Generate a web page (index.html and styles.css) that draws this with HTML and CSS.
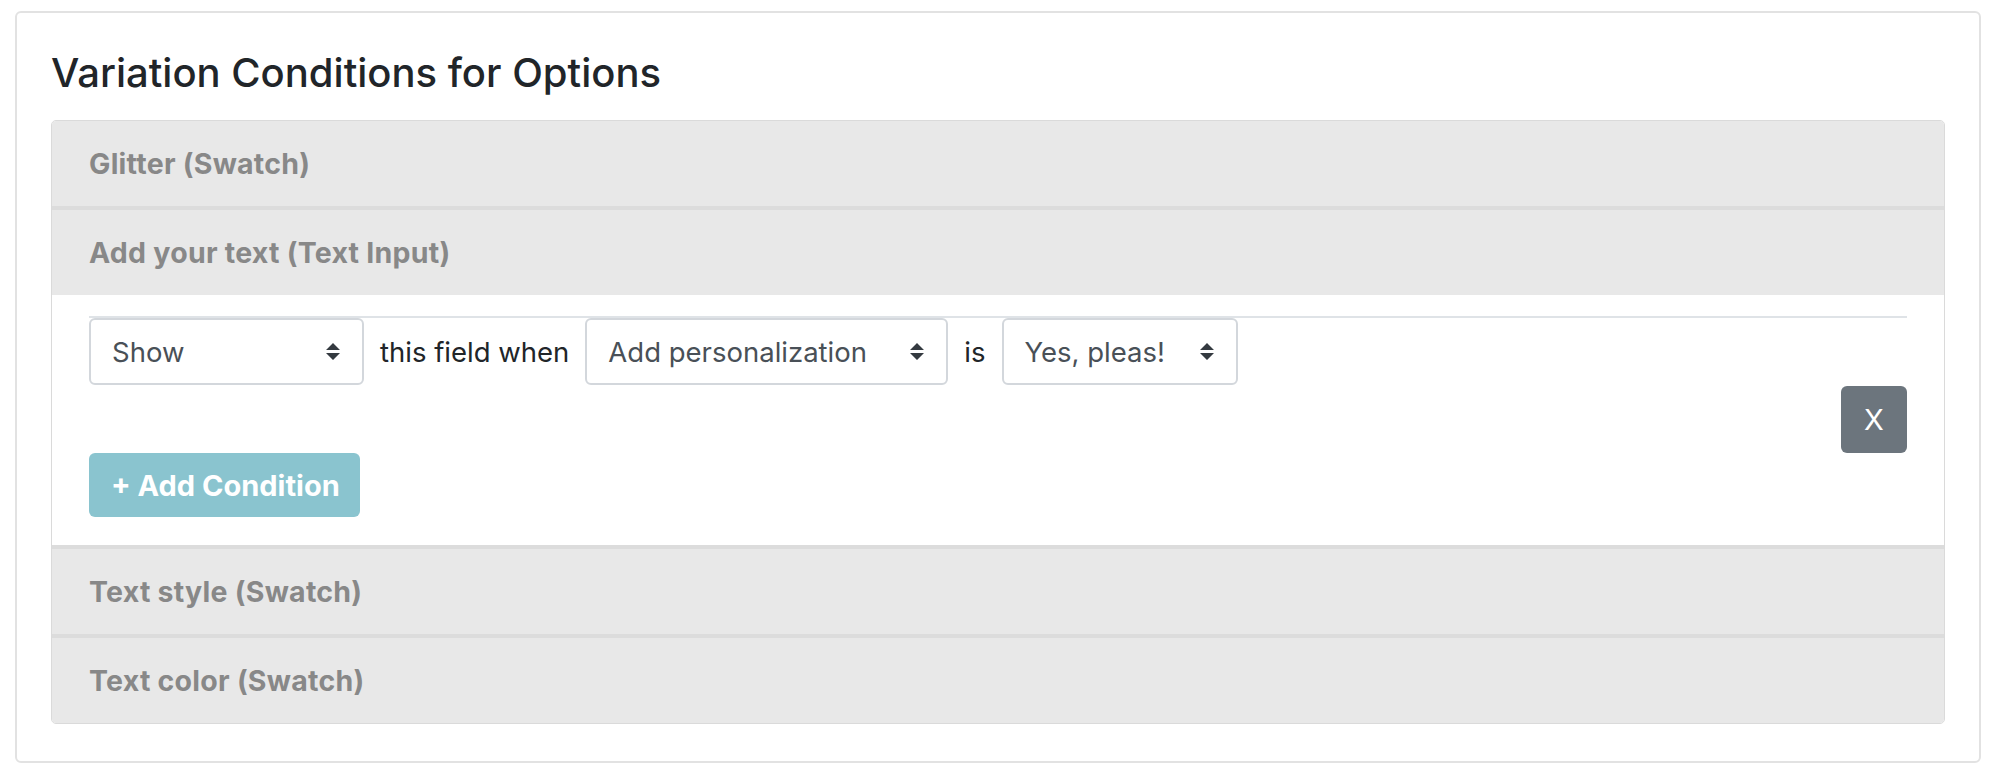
FILE: index.html
```html
<!DOCTYPE html>
<html lang="en">
<head>
<meta charset="utf-8">
<title>Variation Conditions for Options</title>
<link rel="stylesheet" href="styles.css">
</head>
<body>
<div class="card">
  <h3 class="title">Variation Conditions for Options</h3>
  <div class="accordion">
    <div class="acc-item">
      <div class="acc-header">Glitter (Swatch)</div>
    </div>
    <div class="acc-item">
      <div class="acc-header">Add your text (Text Input)</div>
      <div class="acc-body">
        <div class="rule"></div>
        <div class="cond-row">
          <div class="select sel-show"><span>Show</span><svg class="arrow" width="14" height="17" viewBox="0 0 14 17"><path d="M0 7 L7 0 L14 7 Z M0 10 L14 10 L7 17 Z" fill="#343a40"/></svg></div>
          <span class="cond-text">this field when</span>
          <div class="select sel-field"><span>Add personalization</span><svg class="arrow" width="14" height="17" viewBox="0 0 14 17"><path d="M0 7 L7 0 L14 7 Z M0 10 L14 10 L7 17 Z" fill="#343a40"/></svg></div>
          <span class="cond-text">is</span>
          <div class="select sel-value"><span>Yes, pleas!</span><svg class="arrow" width="14" height="17" viewBox="0 0 14 17"><path d="M0 7 L7 0 L14 7 Z M0 10 L14 10 L7 17 Z" fill="#343a40"/></svg></div>
        </div>
        <div class="remove-row"><button class="btn-remove" type="button">X</button></div>
        <button class="btn-add" type="button">+ Add Condition</button>
      </div>
    </div>
    <div class="acc-item">
      <div class="acc-header">Text style (Swatch)</div>
    </div>
    <div class="acc-item">
      <div class="acc-header">Text color (Swatch)</div>
    </div>
  </div>
</div>
</body>
</html>
```

FILE: styles.css
```css
html, body {
  margin: 0;
  padding: 0;
  background: #ffffff;
}

body {
  font-family: "Inter", "Liberation Sans", sans-serif;
  color: #212529;
}

.card {
  box-sizing: border-box;
  margin: 11px 0 0 15px;
  width: 1966px;
  height: 752px;
  border: 2px solid #e2e2e2;
  border-radius: 6px;
  padding: 0 34px;
}

.title {
  margin: 35px 0 22px 0;
  font-size: 40px;
  line-height: 50px;
  font-weight: 500;
  color: #212529;
}

.accordion {
  border: 1px solid #dadada;
  border-radius: 5px;
  overflow: hidden;
}

.acc-item {
  border-bottom: 4px solid #dcdcdc;
}

.acc-item:last-child {
  border-bottom: none;
}

.acc-header {
  height: 85px;
  display: flex;
  align-items: center;
  padding-left: 37px;
  background: #e8e8e8;
  color: #888888;
  font-size: 28.5px;
  letter-spacing: 0.25px;
  font-weight: 700;
}

.acc-body {
  background: #ffffff;
  padding: 21px 37px 28px;
}

.rule {
  height: 2px;
  background: #dfe3e7;
}

.cond-row {
  display: flex;
  align-items: center;
  gap: 16px;
}

.select {
  box-sizing: border-box;
  height: 67px;
  display: flex;
  align-items: center;
  justify-content: space-between;
  padding: 0 22px 0 21px;
  border: 2px solid #d3d7dc;
  border-radius: 6px;
  color: #495057;
  font-size: 27.5px;
}

.sel-show { width: 275px; }
.sel-field { width: 363px; }
.sel-value { width: 236px; }

.arrow {
  flex: none;
}

.cond-text {
  font-size: 27.5px;
  color: #212529;
}

.remove-row {
  display: flex;
  justify-content: flex-end;
  margin-top: 1px;
}

.btn-remove {
  width: 66px;
  height: 67px;
  border: none;
  border-radius: 6px;
  background: #6c757d;
  color: #ffffff;
  font-family: "Inter", "Liberation Sans", sans-serif;
  font-size: 29px;
  font-weight: 400;
  padding: 0;
}

.btn-add {
  display: block;
  width: 271px;
  height: 64px;
  border: none;
  border-radius: 6px;
  background: #8ac4cf;
  color: #ffffff;
  font-family: "Inter", "Liberation Sans", sans-serif;
  font-size: 29px;
  font-weight: 700;
  padding: 0 0 0 22px;
  text-align: left;
}
```
